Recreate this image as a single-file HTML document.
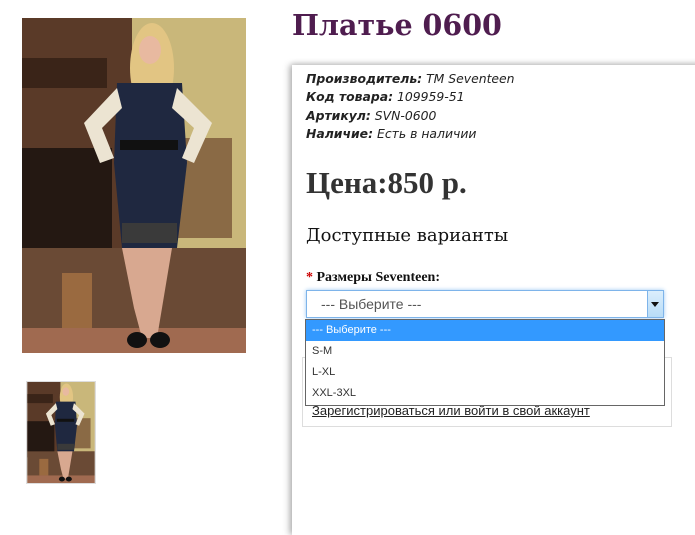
<!DOCTYPE html>
<html><head><meta charset="utf-8"><style>
body{margin:0;width:695px;height:521px;background:#fff;position:relative;overflow:hidden;font-family:"Liberation Sans",sans-serif}
.abs{position:absolute}
h1{position:absolute;left:292px;top:8px;margin:0;font:bold 28.5px "DejaVu Serif",serif;color:#4f1d4f}
.panel{left:292px;top:65px;width:420px;height:470px;background:#fff;box-shadow:-3px 0 6px rgba(0,0,0,.25),0 -2px 5px rgba(0,0,0,.12)}
.info{left:306px;top:70px;font:italic 12.4px "DejaVu Sans",sans-serif;color:#222;line-height:18.3px}
.info b{font-weight:bold}
.price{left:306px;top:165px;font:bold 31px "Liberation Serif",serif;color:#333}
.dv{left:306px;top:225px;font:18px "DejaVu Serif",serif;color:#111}
.lbl{left:306px;top:270px;font:bold 14px "Liberation Serif",serif;color:#111}
.sel{left:306px;top:290px;width:358px;height:28px;border:1px solid #7eb4ea;box-shadow:0 0 4px #9cc8f2;background:#fff;box-sizing:border-box;font:14px "Liberation Sans Narrow","Liberation Sans",sans-serif;color:#555}
.dd{left:305px;top:319px;width:360px;height:87px;border:1px solid #666;background:#fff;box-sizing:border-box;font:11px "Liberation Sans",sans-serif;color:#333}
.dd div{height:21px;line-height:21px;padding-left:6px}
</style></head><body>
<svg class="abs" style="left:22px;top:18px" width="224" height="335" viewBox="0 0 224 335" id="ph">
<rect width="224" height="335" fill="#8a6a4a"/>
<rect x="110" y="0" width="114" height="230" fill="#c9b77a"/>
<rect x="0" y="0" width="110" height="230" fill="#5a3a28"/>
<rect x="0" y="40" width="85" height="30" fill="#3a2418"/>
<rect x="0" y="130" width="90" height="120" fill="#241812"/>
<rect x="155" y="120" width="55" height="100" fill="#8a6a45"/>
<rect x="0" y="230" width="224" height="80" fill="#6a4a35"/>
<rect x="0" y="310" width="224" height="25" fill="#a06a50"/>
<rect x="40" y="255" width="30" height="55" fill="#9a6a40"/>
<ellipse cx="130" cy="50" rx="22" ry="45" fill="#e2c583"/>
<ellipse cx="128" cy="32" rx="11" ry="14" fill="#e8b9a0"/>
<path d="M95 65 L160 65 L165 145 L155 230 L100 230 L92 145Z" fill="#1f2840"/>
<path d="M95 70 L62 105 L78 145 L92 140 L80 110 L100 90Z" fill="#ece4d2"/>
<path d="M155 70 L190 105 L172 145 L160 140 L172 110 L150 90Z" fill="#ece4d2"/>
<rect x="98" y="122" width="58" height="10" fill="#111"/>
<rect x="100" y="205" width="55" height="20" fill="#3a3a3a"/>
<path d="M100 230 L150 230 L135 320 L120 320 L112 290Z" fill="#d8a890"/>
<ellipse cx="115" cy="322" rx="10" ry="8" fill="#111"/>
<ellipse cx="138" cy="322" rx="10" ry="8" fill="#111"/>
</svg>
<div class="abs" style="left:26px;top:381px;width:68px;height:101px;border:1px solid #ddd;overflow:hidden">
<svg width="68" height="101" viewBox="0 0 224 335"><use href="#ph"/></svg></div>
<h1>Платье 0600</h1>
<div class="abs panel"></div>
<div class="abs info"><b>Производитель:</b> TM Seventeen<br><b>Код товара:</b> 109959-51<br><b>Артикул:</b> SVN-0600<br><b>Наличие:</b> Есть в наличии</div>
<div class="abs price">Цена:850 р.</div>
<div class="abs dv">Доступные варианты</div>
<div class="abs lbl"><span style="color:#c00">*</span> Размеры Seventeen:</div>
<div class="abs" style="left:302px;top:357px;width:368px;height:68px;border:1px solid #ddd"></div>
<div class="abs" style="left:312px;top:403px;font:13px 'Liberation Sans',sans-serif;color:#222;text-decoration:underline">Зарегистрироваться или войти в свой аккаунт</div>
<div class="abs sel"><span style="position:absolute;left:14px;top:5px">--- Выберите ---</span>
<div style="position:absolute;right:0;top:0;width:15px;height:26px;background:linear-gradient(#dbeefc,#b8dcf7);border-left:1px solid #7eb4ea"><div style="position:absolute;left:3px;top:11px;border:4px solid transparent;border-top:5px solid #111;border-bottom:0"></div></div></div>
<div class="abs dd"><div style="background:#3399ff;color:#fff">--- Выберите ---</div><div>S-M</div><div>L-XL</div><div>XXL-3XL</div></div>
</body></html>
